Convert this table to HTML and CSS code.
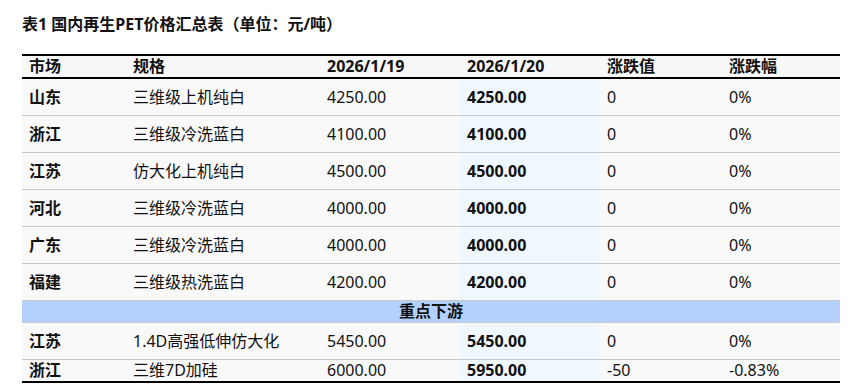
FILE: index.html
```html
<!DOCTYPE html>
<html lang="zh">
<head>
<meta charset="utf-8">
<link rel="stylesheet" href="styles.css">
</head>
<body>
<div class="page">
  <h1 class="title">表1 国内再生PET价格汇总表（单位：元/吨）</h1>
  <table class="price">
    <colgroup>
      <col class="c1"><col class="c2"><col class="c3"><col class="c4"><col class="c5"><col class="c6">
    </colgroup>
    <thead>
      <tr><th>市场</th><th>规格</th><th>2026/1/19</th><th>2026/1/20</th><th>涨跌值</th><th>涨跌幅</th></tr>
    </thead>
    <tbody>
      <tr><td class="b">山东</td><td>三维级上机纯白</td><td>4250.00</td><td class="b now">4250.00</td><td>0</td><td>0%</td></tr>
      <tr><td class="b">浙江</td><td>三维级冷洗蓝白</td><td>4100.00</td><td class="b now">4100.00</td><td>0</td><td>0%</td></tr>
      <tr><td class="b">江苏</td><td>仿大化上机纯白</td><td>4500.00</td><td class="b now">4500.00</td><td>0</td><td>0%</td></tr>
      <tr><td class="b">河北</td><td>三维级冷洗蓝白</td><td>4000.00</td><td class="b now">4000.00</td><td>0</td><td>0%</td></tr>
      <tr><td class="b">广东</td><td>三维级冷洗蓝白</td><td>4000.00</td><td class="b now">4000.00</td><td>0</td><td>0%</td></tr>
      <tr><td class="b">福建</td><td>三维级热洗蓝白</td><td>4200.00</td><td class="b now">4200.00</td><td>0</td><td>0%</td></tr>
      <tr class="section"><td colspan="6">重点下游</td></tr>
      <tr><td class="b">江苏</td><td>1.4D高强低伸仿大化</td><td>5450.00</td><td class="b now">5450.00</td><td>0</td><td>0%</td></tr>
      <tr class="last"><td class="b">浙江</td><td>三维7D加硅</td><td>6000.00</td><td class="b now">5950.00</td><td>-50</td><td>-0.83%</td></tr>
    </tbody>
  </table>
</div>
</body>
</html>
```
FILE: styles.css
```css
html, body {
  margin: 0;
  padding: 0;
  background: #ffffff;
}
body {
  font-family: "Noto Sans", "Noto Sans CJK SC", sans-serif;
  color: #111111;
}
.page {
  padding: 14px 11px 0 22px;
}
.title {
  margin: 0 0 19px 0;
  font-size: 16px;
  line-height: 21px;
  font-weight: 700;
}
.price {
  width: 818px;
  border-collapse: collapse;
  table-layout: fixed;
  font-size: 16px;
}
.c1 { width: 104px; }
.c2 { width: 194px; }
.c3 { width: 140px; }
.c4 { width: 140px; }
.c5 { width: 122px; }
.c6 { width: 118px; }
.price th {
  text-align: left;
  font-weight: 700;
  background: #f7f7f7;
  border-top: 2px solid #000;
  border-bottom: 2px solid #000;
  height: 21px;
  padding: 0 7px;
  line-height: 21px;
}
.price td {
  background: #f9f9f9;
  border-bottom: 1px solid #c8c8c8;
  height: 36px;
  padding: 0 7px;
  line-height: 21px;
}
.price td.b { font-weight: 700; }
.price td.now { background: #f0f8ff; }
.price .section td {
  background: #b4d1fd;
  text-align: center;
  font-weight: 700;
  height: 21px;
}
.price .last td {
  height: 21px;
  border-bottom: 2px solid #000;
}
```
